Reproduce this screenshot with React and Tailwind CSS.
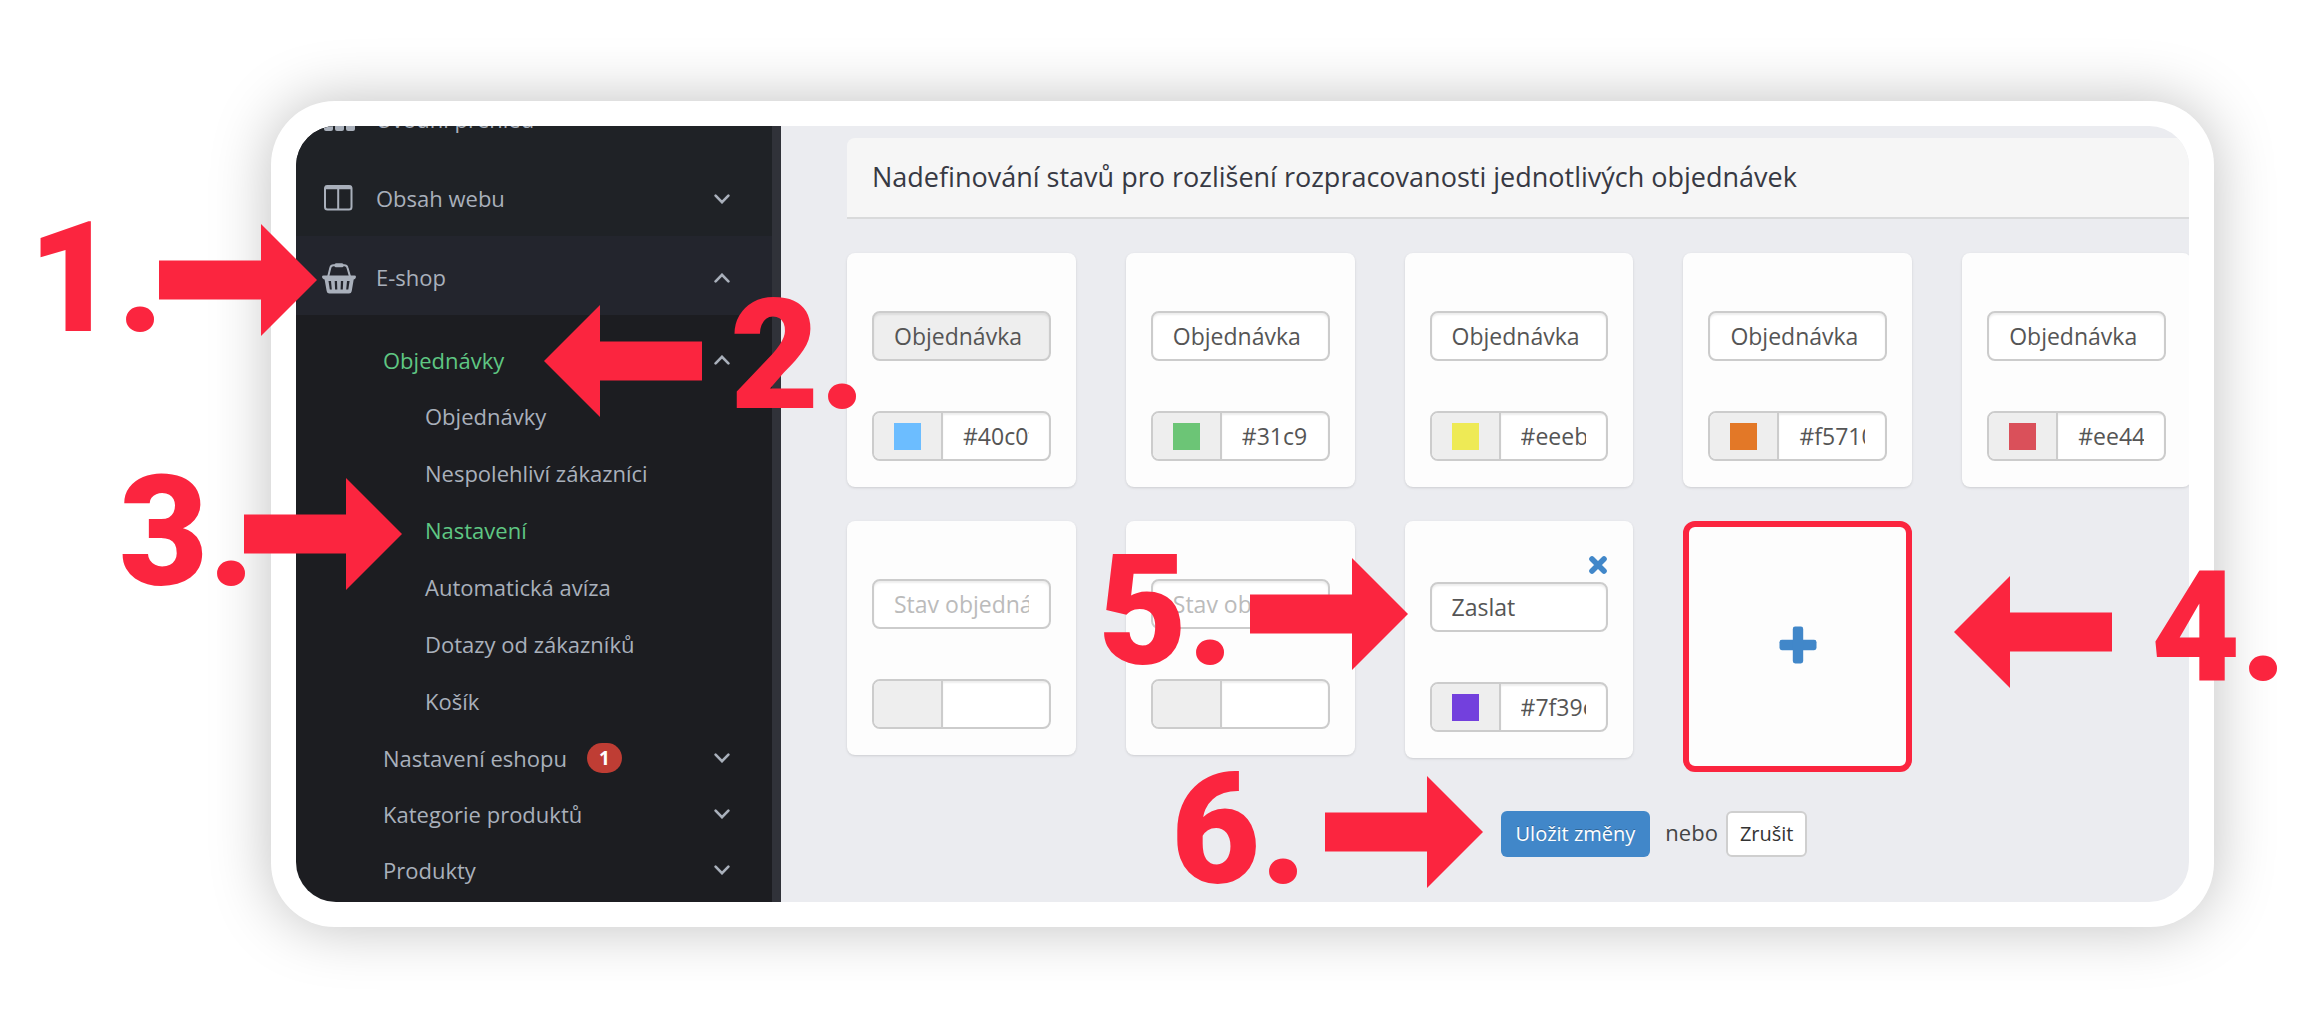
import { useState } from "react";

const STATES = [
  { name: "Objednávka", color: "#40c0ff", swatch: "bg-[#6cbdff]", locked: true },
  { name: "Objednávka", color: "#31c95b", swatch: "bg-[#6cc576]" },
  { name: "Objednávka", color: "#eeeb20", swatch: "bg-[#eeea55]" },
  { name: "Objednávka", color: "#f57100", swatch: "bg-[#e37827]" },
  { name: "Objednávka", color: "#ee4444", swatch: "bg-[#da505a]" },
  { name: "", color: "" },
  { name: "", color: "" },
  { name: "Zaslat", color: "#7f39e0", swatch: "bg-[#7340dd]", removable: true },
];

const ORDER_LINKS = [
  { label: "Objednávky" },
  { label: "Nespolehliví zákazníci" },
  { label: "Nastavení", active: true },
  { label: "Automatická avíza" },
  { label: "Dotazy od zákazníků" },
  { label: "Košík" },
];

const SHOP_LINKS = [
  { label: "Nastavení eshopu", badge: 1 },
  { label: "Kategorie produktů" },
  { label: "Produkty" },
];

const STEPS = [
  { n: "1.", label: "left-[28px] top-[202px]", arrow: "left-[159px] top-[224px]" },
  { n: "2.", label: "left-[730px] top-[279px]", arrow: "left-[544px] top-[305px]", back: true },
  { n: "3.", label: "left-[119px] top-[456px]", arrow: "left-[244px] top-[478px]" },
  { n: "4.", label: "left-[2151px] top-[551px]", arrow: "left-[1954px] top-[576px]", back: true },
  { n: "5.", label: "left-[1098px] top-[535px]", arrow: "left-[1250px] top-[558px]" },
  { n: "6.", label: "left-[1171px] top-[754px]", arrow: "left-[1325px] top-[776px]" },
];

const Chevron = ({ up }) => (
  <svg className={`w-4 h-[10px] ml-auto shrink-0 ${up ? "rotate-180" : ""}`} viewBox="0 0 16 10" fill="none" stroke="currentColor" strokeWidth="2.6" strokeLinecap="round">
    <path d="M1.6 1.6 8 8.2l6.4-6.6" />
  </svg>
);

const ChartIcon = () => (
  <svg className="w-[34px] h-8" viewBox="0 0 34 32" fill="currentColor">
    <rect x="2" y="14" width="9" height="13" rx="2" />
    <rect x="13" y="6" width="9" height="21" rx="2" />
    <rect x="24" y="10" width="9" height="17" rx="2" />
  </svg>
);

const ColumnsIcon = () => (
  <svg className="w-[34px] h-8" viewBox="0 0 34 32" fill="none" stroke="currentColor" strokeWidth="2">
    <rect x="3" y="3" width="26.5" height="23.5" rx="2.5" />
    <path d="M3 4.5h26.5" strokeWidth="3.6" />
    <path d="M16.2 5v21" />
  </svg>
);

const BasketIcon = () => (
  <svg className="w-[34px] h-8" viewBox="0 0 34 32">
    <path d="M6.2 14.5 8.4 5.6Q9 3.2 11.4 3.2H22.4Q24.8 3.2 25.4 5.6L28 14.5" fill="none" stroke="currentColor" strokeWidth="2" />
    <rect x="12.5" y="1.2" width="9" height="4" rx="1.5" fill="currentColor" />
    <path fillRule="evenodd" fill="currentColor" d="M1.5 13.5h31a1.5 1.5 0 0 1 1.3 2c-.2 1-1 1.7-2.1 1.9L29.7 29.2Q29.3 31.5 27 31.5H7.4Q5.1 31.5 4.7 29.2L2.6 17.4C1.4 17.2.6 16.5.2 15.5a1.5 1.5 0 0 1 1.3-2ZM6.5 19l1.3 8.6h2L9 19ZM12.7 19l.4 8.6h2.2L15 19ZM18.9 19l-.3 8.6h2.2l.4-8.6ZM25 19l-.8 8.6h2.1L27.6 19Z" />
  </svg>
);

const Arrow = ({ back }) => (
  <svg className={`w-[158px] h-[112px] ${back ? "rotate-180" : ""}`} viewBox="0 0 158 112" fill="currentColor">
    <path d="M0 36.5H102V0L158 56 102 112V75.5H0Z" />
  </svg>
);

const MainItem = ({ icon, label, open, chevron = true }) => (
  <a href="#" className={`flex items-center gap-5 h-[79px] pt-1 pl-[26px] pr-[42px] ${open ? "bg-[#23252d]" : ""}`}>
    {icon}
    <span>{label}</span>
    {chevron && <Chevron up={open} />}
  </a>
);

const StateCard = ({ item, index }) => (
  <div className="rounded-lg bg-[#fdfdfd] px-[25px] pb-[26px] shadow-sm">
    <div className={`flex items-end justify-end ${item.removable ? "h-[61px] pb-2" : "h-[58px]"}`}>
      {item.removable && (
        <button type="button" aria-label="Odebrat stav" className="text-[#4187c9]">
          <svg className="w-5 h-[18px]" viewBox="0 0 20 18" stroke="currentColor" strokeWidth="5.6" strokeLinecap="round">
            <path d="M4 3l12 12M16 3 4 15" />
          </svg>
        </button>
      )}
    </div>
    <input
      type="text"
      aria-label={`Název stavu ${index + 1}`}
      defaultValue={item.name}
      placeholder="Stav objednávky"
      readOnly={item.locked}
      className={`block w-full h-[50px] rounded-lg border-2 border-[#cccccc] px-5 text-[23px] text-[#555555] placeholder:text-[#bbbbbb] shadow-[inset_0_2px_2px_rgba(0,0,0,0.07)] ${item.locked ? "bg-[#eeeeee]" : "bg-white"}`}
    />
    <div className="mt-[50px] flex h-[50px] rounded-lg border-2 border-[#cccccc] overflow-hidden bg-white">
      <span className="flex w-[69px] shrink-0 items-center justify-center border-r-2 border-[#cccccc] bg-[#eeeeee]">
        {item.swatch && <i className={`block size-[27px] ${item.swatch}`} />}
      </span>
      <input
        type="text"
        aria-label={`Barva stavu ${index + 1}`}
        defaultValue={item.color}
        className="min-w-0 flex-1 px-5 text-[23px] text-[#555555] shadow-[inset_0_2px_2px_rgba(0,0,0,0.07)]"
      />
    </div>
  </div>
);

export default function App() {
  const [states, setStates] = useState(STATES);

  return (
    <div className="relative min-h-screen overflow-hidden bg-white pt-[101px] pr-[102px] pb-[101px] pl-[271px] font-['Open_Sans','Noto_Sans',sans-serif]">
      <div className="rounded-[64px] bg-white p-[25px] shadow-[0_0_60px_rgba(0,0,0,0.25)]">
        <div className="flex overflow-hidden rounded-[40px] bg-[#ebecf0]">
          <nav className="w-[485px] shrink-0 border-r-[9px] border-[#303239] bg-[#1c1d21] pb-1 text-[22px] text-[#a9b0bb]">
            <div className="-mt-12 bg-[#1f2226]">
              <MainItem icon={<ChartIcon />} label="Úvodní přehled" chevron={false} />
              <MainItem icon={<ColumnsIcon />} label="Obsah webu" />
              <MainItem icon={<BasketIcon />} label="E-shop" open />
            </div>
            <ul className="pt-[17px] pl-[87px] pr-[42px]">
              <li>
                <a href="#" className="flex h-14 items-center text-[#5fc783]">
                  Objednávky
                  <span className="ml-auto text-[#a9b0bb]"><Chevron up /></span>
                </a>
                <ul className="pl-[42px]">
                  {ORDER_LINKS.map((l) => (
                    <li key={l.label}>
                      <a href="#" className={`flex h-[57px] items-center ${l.active ? "text-[#5fc783]" : ""}`}>{l.label}</a>
                    </li>
                  ))}
                </ul>
              </li>
              {SHOP_LINKS.map((l) => (
                <li key={l.label}>
                  <a href="#" className="flex h-14 items-center">
                    {l.label}
                    {l.badge && (
                      <span className="ml-5 flex h-[30px] w-[35px] items-center justify-center rounded-full bg-[#bf3d34] text-[19px] font-bold text-white">{l.badge}</span>
                    )}
                    <Chevron />
                  </a>
                </li>
              ))}
            </ul>
          </nav>

          <main className="min-w-0 flex-1 pt-3 pl-[66px]">
            <h1 className="flex h-[81px] items-center rounded-tl-lg border-b-2 border-[#d9dadb] bg-[#f6f6f6] pl-[25px] text-[27px] text-[#373943] whitespace-nowrap">
              Nadefinování stavů pro rozlišení rozpracovanosti jednotlivých objednávek
            </h1>
            <form onSubmit={(e) => e.preventDefault()}>
              <div className="mt-[34px] -mr-0.5 grid grid-cols-5 items-start gap-x-[50px] gap-y-[34px]">
                {states.map((s, i) => <StateCard key={i} item={s} index={i} />)}
                <button
                  type="button"
                  aria-label="Přidat stav"
                  onClick={() => setStates([...states, { name: "", color: "", removable: true }])}
                  className="flex h-[251px] items-center justify-center rounded-xl border-[6px] border-[#fb253f] bg-[#fdfdfd] pb-1 text-[#4187c9]"
                >
                  <svg className="size-[38px]" viewBox="0 0 38 38" fill="currentColor">
                    <rect x="0.5" y="13.8" width="37" height="10.4" rx="2.4" />
                    <rect x="13.8" y="0.5" width="10.4" height="37" rx="2.4" />
                  </svg>
                </button>
              </div>
              <div className="mt-[39px] flex items-center justify-center pl-[272px] text-[20px]">
                <button type="submit" className="h-[46px] rounded-md bg-[#4187c9] px-[15px] text-white [text-shadow:0_-1px_0_rgba(0,0,0,0.25)]">Uložit změny</button>
                <span className="ml-[15px] mr-2 pb-1 text-[22px] text-[#444444]">nebo</span>
                <button type="button" className="h-[46px] rounded-md border-2 border-[#cfcfcf] bg-white px-3 text-[#333333]">Zrušit</button>
              </div>
            </form>
          </main>
        </div>
      </div>

      {STEPS.map((s) => (
        <div key={s.n} className="pointer-events-none text-[#fb253f]">
          <span className={`absolute font-['Roboto',sans-serif] text-[154px] leading-[154px] font-black ${s.label}`}>{s.n}</span>
          <span className={`absolute ${s.arrow}`}><Arrow back={s.back} /></span>
        </div>
      ))}
    </div>
  );
}
